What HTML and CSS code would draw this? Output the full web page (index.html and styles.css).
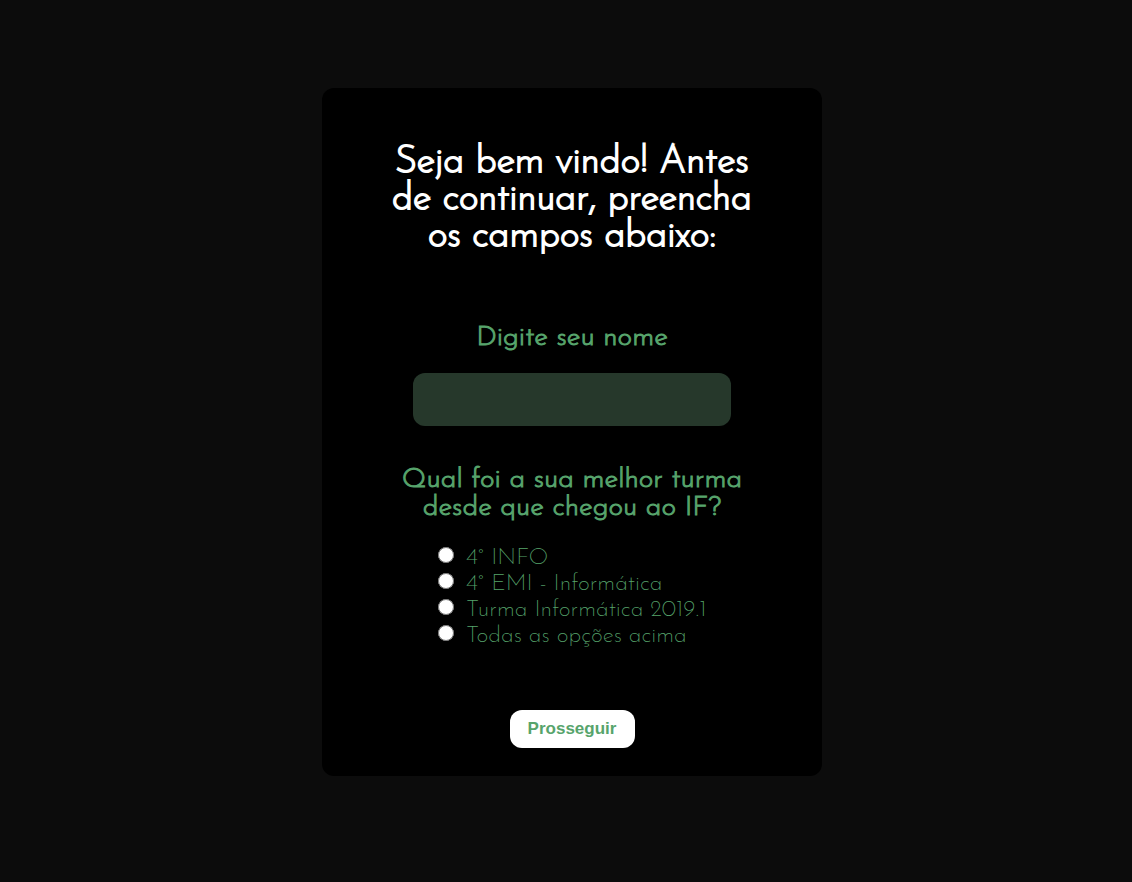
FILE: index.html
```html
<!DOCTYPE html>
<html lang="pt-BR">
<head>
<meta charset="utf-8">
<meta name="viewport" content="width=device-width, initial-scale=1">
<title>Seja bem vindo!</title>
<link rel="stylesheet" href="styles.css">
</head>
<body>
<main class="page">
  <form class="card">
    <h1 class="title">Seja bem vindo! Antes de continuar, preencha os campos abaixo:</h1>
    <label class="prompt" for="nome">Digite seu nome</label>
    <input class="name-input" type="text" id="nome" name="nome">
    <fieldset class="choices">
      <legend class="prompt question">Qual foi a sua melhor turma desde que chegou ao IF?</legend>
      <div class="options">
        <label class="option"><input class="radio" type="radio" name="turma" value="info"><span>4° INFO</span></label>
        <label class="option"><input class="radio" type="radio" name="turma" value="emi"><span>4° EMI - Informática</span></label>
        <label class="option"><input class="radio" type="radio" name="turma" value="2019"><span>Turma Informática 2019.1</span></label>
        <label class="option"><input class="radio" type="radio" name="turma" value="todas"><span>Todas as opções acima</span></label>
      </div>
    </fieldset>
    <button class="submit" type="submit">Prosseguir</button>
  </form>
</main>
</body>
</html>
```
FILE: styles.css
```css
*, *::before, *::after {
  box-sizing: border-box;
}

body {
  margin: 0;
  background: #0c0c0c;
  color: #fff;
  font-family: "Josefin Sans", Lato, sans-serif;
}

.page {
  display: flex;
  justify-content: center;
  align-items: center;
  min-height: 100vh;
  padding: 0 0 18px 12px;
}

.card {
  display: flex;
  flex-direction: column;
  align-items: center;
  width: 100%;
  max-width: 500px;
  padding: 56px 48px 28px;
  border-radius: 12px;
  background: #000;
}

.title {
  max-width: 380px;
  margin: 0 0 69px;
  font-size: 38px;
  font-weight: 200;
  line-height: 37px;
  text-align: center;
  -webkit-text-stroke: 2px currentColor;
}

.prompt {
  color: #57a46c;
  font-size: 28px;
  font-weight: 300;
  line-height: 28px;
  text-align: center;
  -webkit-text-stroke: 1px currentColor;
}

.name-input {
  width: 100%;
  max-width: 318px;
  height: 53px;
  margin: 21px 0 40px;
  padding: 0 16px;
  border: 0;
  border-radius: 12px;
  background: #26382b;
  color: #fff;
  font: inherit;
  font-size: 23px;
}

.choices {
  width: 100%;
  max-width: 350px;
  min-width: 0;
  margin: 0 0 60px;
  padding: 0;
  border: 0;
}

.question {
  width: 100%;
  padding: 0;
}

.options {
  display: flex;
  flex-direction: column;
  padding: 24px 0 0 41px;
}

.option {
  display: flex;
  align-items: flex-start;
  gap: 12px;
  color: #57a46c;
  font-size: 23px;
  font-weight: 200;
  line-height: 26px;
}

.radio {
  flex: none;
  width: 16px;
  height: 16px;
  margin: 1px 0 0;
}

.submit {
  min-width: 125px;
  height: 38px;
  padding: 0 16px;
  border: 0;
  border-radius: 12px;
  background: #fff;
  color: #57a46c;
  font-family: "Liberation Sans", Arial, sans-serif;
  font-size: 17px;
  font-weight: 700;
  cursor: pointer;
}
```
